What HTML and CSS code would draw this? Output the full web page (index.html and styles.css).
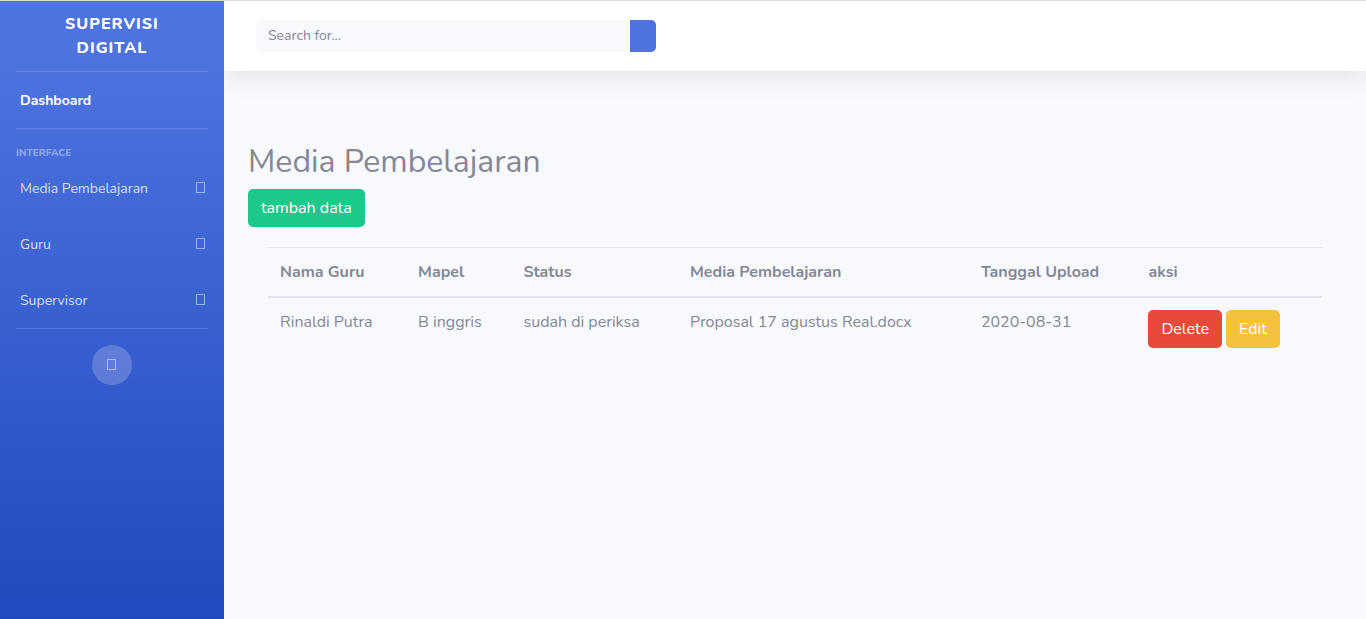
FILE: index.html
```html
<!DOCTYPE html>
<html lang="id">
<head>
<meta charset="utf-8">
<meta name="viewport" content="width=device-width, initial-scale=1">
<title>Supervisi Digital</title>
<link rel="stylesheet" href="styles.css">
</head>
<body>
<div class="wrapper">
  <nav class="sidebar">
    <a class="brand" href="#">Supervisi Digital</a>
    <hr class="divider">
    <a class="nav-link active" href="#">Dashboard</a>
    <hr class="divider">
    <div class="sidebar-heading">Interface</div>
    <a class="nav-link" href="#"><span>Media Pembelajaran</span><svg class="glyph" viewBox="0 0 9 11" aria-hidden="true"><path d="M.5.5h8v10h-8z"/></svg></a>
    <a class="nav-link" href="#"><span>Guru</span><svg class="glyph" viewBox="0 0 9 11" aria-hidden="true"><path d="M.5.5h8v10h-8z"/></svg></a>
    <a class="nav-link" href="#"><span>Supervisor</span><svg class="glyph" viewBox="0 0 9 11" aria-hidden="true"><path d="M.5.5h8v10h-8z"/></svg></a>
    <hr class="divider">
    <button class="toggle" type="button" aria-label="Toggle sidebar"><svg class="glyph" viewBox="0 0 9 11" aria-hidden="true"><path d="M.5.5h8v10h-8z"/></svg></button>
  </nav>
  <div class="content">
    <header class="topbar">
      <form class="search">
        <input class="search-input" type="text" placeholder="Search for..." aria-label="Search">
        <button class="search-button" type="button" aria-label="Submit search"></button>
      </form>
    </header>
    <main class="page">
      <h2 class="title">Media Pembelajaran</h2>
      <button class="btn btn-success" type="button">tambah data</button>
      <div class="table-wrap">
        <table class="table">
          <colgroup>
            <col class="col-guru"><col class="col-mapel"><col class="col-status"><col class="col-media"><col class="col-date"><col>
          </colgroup>
          <thead>
            <tr><th>Nama Guru</th><th>Mapel</th><th>Status</th><th>Media Pembelajaran</th><th>Tanggal Upload</th><th>aksi</th></tr>
          </thead>
          <tbody>
            <tr>
              <td>Rinaldi Putra</td><td>B inggris</td><td>sudah di periksa</td><td>Proposal 17 agustus Real.docx</td><td>2020-08-31</td>
              <td><div class="actions"><button class="btn btn-danger" type="button">Delete</button><button class="btn btn-warning" type="button">Edit</button></div></td>
            </tr>
          </tbody>
        </table>
      </div>
    </main>
  </div>
</div>
</body>
</html>
```
FILE: styles.css
```css
* { box-sizing: border-box; }

body {
  margin: 0;
  font-family: Nunito, Lato, "Open Sans", sans-serif;
  font-size: 16px;
  line-height: 24px;
  color: #858796;
  background: #f8f9fc;
}

.wrapper {
  display: flex;
  min-height: 100vh;
  border-top: 1px solid #d9dade;
}

.sidebar {
  flex: none;
  width: 224px;
  display: flex;
  flex-direction: column;
  background: linear-gradient(180deg, #4e73df 10%, #224abe 100%);
}

.brand {
  display: flex;
  align-items: center;
  height: 70px;
  padding: 0 56px;
  text-align: center;
  text-transform: uppercase;
  text-decoration: none;
  font-weight: 800;
  letter-spacing: 1px;
  color: #fff;
}

.divider {
  width: auto;
  margin: 0 16px;
  border: 0;
  border-top: 1px solid rgba(255, 255, 255, 0.15);
}

.nav-link {
  display: flex;
  align-items: center;
  justify-content: space-between;
  height: 56px;
  padding: 2px 19px 0 20px;
  font-size: 14px;
  text-decoration: none;
  color: rgba(255, 255, 255, 0.8);
}

.nav-link.active {
  font-weight: 700;
  color: #fff;
}

.nav-link .glyph {
  margin-bottom: 4px;
}

.sidebar-heading {
  padding: 17px 16px 0;
  font-size: 10px;
  line-height: 14px;
  font-weight: 800;
  text-transform: uppercase;
  color: rgba(255, 255, 255, 0.4);
}

.glyph {
  width: 9px;
  height: 11px;
  fill: none;
  stroke: rgba(255, 255, 255, 0.5);
}

.toggle {
  display: flex;
  align-items: center;
  justify-content: center;
  align-self: center;
  width: 40px;
  height: 40px;
  margin: 16px 0;
  padding: 0 1px 1px 0;
  border: 0;
  border-radius: 50%;
  background: rgba(255, 255, 255, 0.2);
}

.content {
  flex: 1;
  min-width: 0;
}

.topbar {
  display: flex;
  align-items: center;
  height: 70px;
  padding: 0 32px;
  background: #fff;
  box-shadow: 0 2px 28px 0 rgba(58, 59, 69, 0.15);
  clip-path: inset(0 0 -50px 0);
}

.search {
  display: flex;
  width: 400px;
  height: 32px;
}

.search-input {
  flex: 1;
  min-width: 0;
  padding: 0 12px;
  border: 0;
  border-radius: 5px 0 0 5px;
  font: inherit;
  font-size: 14px;
  color: #6e707e;
  background: #f8f9fc;
}

.search-input::placeholder {
  color: #858796;
  opacity: 1;
}

.search-button {
  width: 26px;
  border: 0;
  border-radius: 0 5px 5px 0;
  background: #4e73df;
}

.page {
  padding: 72px 24px 24px;
}

.title {
  margin: 0 0 8px;
  font-size: 32px;
  line-height: 38px;
  font-weight: 400;
}

.btn {
  height: 38px;
  padding: 0 13px;
  border: 0;
  border-radius: 5px;
  font: inherit;
  color: #fff;
}

.btn-success { background: #1cc88a; }
.btn-danger { background: #e74a3b; }
.btn-warning { background: #f6c23e; }

.table-wrap {
  padding: 20px;
}

.table {
  width: 100%;
  table-layout: fixed;
  border-collapse: collapse;
}

.col-guru { width: 13.1%; }
.col-mapel { width: 10%; }
.col-status { width: 15.8%; }
.col-media { width: 27.6%; }
.col-date { width: 15.9%; }

.table th,
.table td {
  padding: 12px;
  text-align: left;
  vertical-align: top;
  border-top: 1px solid #e3e6f0;
}

.table thead th {
  font-weight: 700;
  border-bottom: 2px solid #e3e6f0;
}

.actions {
  display: flex;
  gap: 4px;
}
```
